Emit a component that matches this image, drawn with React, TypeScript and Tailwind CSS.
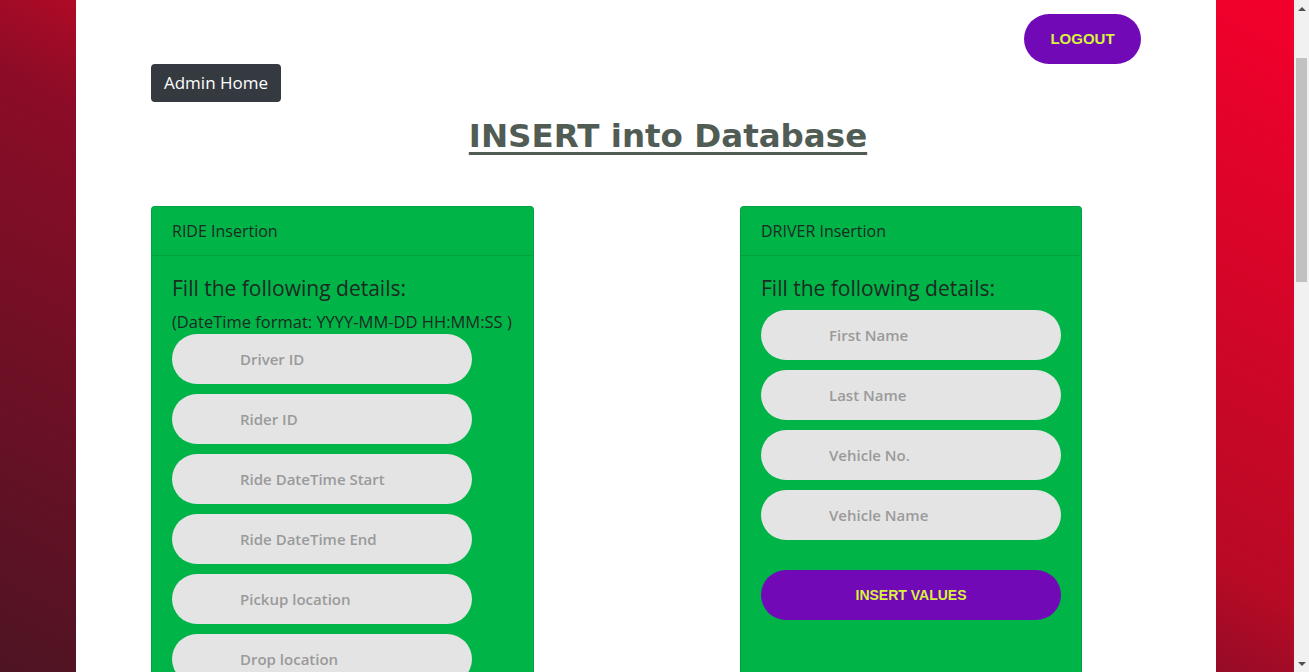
const poppins = { fontFamily: '"Open Sans", "Noto Sans", sans-serif' };

function Field({ placeholder }: { placeholder: string }) {
  return (
    <input
      type="text"
      placeholder={placeholder}
      className="h-[50px] w-[300px] rounded-full bg-[#e4e4e4] pl-[68px] text-[15px] font-semibold text-[#333] outline-none placeholder:text-[#9a9a9a]"
    />
  );
}

function InsertButton() {
  return (
    <button className="mt-[30px] h-[50px] w-[300px] rounded-full bg-[#7209b7] font-['Liberation_Sans',sans-serif] text-[14px] font-bold text-[#d7f23b]">
      INSERT VALUES
    </button>
  );
}

// fake browser scrollbar, page is scrolled a little in the reference
function Scrollbar() {
  return (
    <div className="flex w-[15px] shrink-0 flex-col items-center bg-[#f1f1f1]">
      <div className="flex h-[17px] items-center justify-center">
        <div className="h-0 w-0 border-x-[4px] border-b-[4px] border-x-transparent border-b-[#505050]" />
      </div>
      <div className="h-[41px]" />
      <div className="h-[224px] w-[11px] bg-[#c1c1c1]" />
      <div className="flex-1" />
      <div className="flex h-[17px] items-center justify-center">
        <div className="h-0 w-0 border-x-[4px] border-t-[4px] border-x-transparent border-t-[#505050]" />
      </div>
    </div>
  );
}

export default function App() {
  const rideFields = [
    "Driver ID",
    "Rider ID",
    "Ride DateTime Start",
    "Ride DateTime End",
    "Pickup location",
    "Drop location",
    "Ride Fare",
  ];
  const driverFields = ["First Name", "Last Name", "Vehicle No.", "Vehicle Name"];

  return (
    <div className="flex h-screen overflow-hidden" style={poppins}>
      <div className="flex-1 overflow-hidden bg-[linear-gradient(to_top_right,#4e1423_0%,#8c0c27_45%,#b80a25_55%,#f3002c_100%)]">
        <div className="ml-[76px] min-h-[1100px] w-[1140px] bg-white px-[75px] pt-[14px]">
          <div className="flex justify-end">
            <button className="h-[50px] w-[117px] rounded-full bg-[#7209b7] font-['Liberation_Sans',sans-serif] text-[15px] font-bold text-[#d7f23b]">
              LOGOUT
            </button>
          </div>
          <button className="h-[38px] w-[130px] rounded bg-[#343a40] text-[17px] text-white">
            Admin Home
          </button>

          <h1 className="mt-[12px] pl-[44px] text-center font-['DejaVu_Sans',sans-serif] text-[32.5px] font-bold leading-[44px] text-[#505c54] underline decoration-[3px] underline-offset-[5px]">
            INSERT into Database
          </h1>

          <div className="mt-[48px] flex items-start gap-[206px]">
            {/* Ride card */}
            <div className="w-[383px] rounded border border-black/10 bg-[#00b448]">
              <div className="border-b border-black/10 px-[20px] py-[11px] text-[16px] leading-[26px] text-[#1d2a22]">
                RIDE Insertion
              </div>
              <div className="px-[20px] pb-[40px] pt-[17px]">
                <p className="text-[21px] leading-[30px] text-[#1d2a22]">Fill the following details:</p>
                <p className="mt-[6px] text-[16.5px] leading-[25px] text-[#1d2a22]">
                  (DateTime format: YYYY-MM-DD HH:MM:SS )
                </p>
                <div className="flex flex-col gap-[10px]">
                  {rideFields.map((f) => (
                    <Field key={f} placeholder={f} />
                  ))}
                </div>
                <InsertButton />
              </div>
            </div>

            {/* Driver card */}
            <div className="w-[342px] rounded border border-black/10 bg-[#00b448]">
              <div className="border-b border-black/10 px-[20px] py-[11px] text-[16px] leading-[26px] text-[#1d2a22]">
                DRIVER Insertion
              </div>
              <div className="px-[20px] pb-[60px] pt-[17px]">
                <p className="mb-[7px] text-[21px] leading-[30px] text-[#1d2a22]">Fill the following details:</p>
                <div className="flex flex-col gap-[10px]">
                  {driverFields.map((f) => (
                    <Field key={f} placeholder={f} />
                  ))}
                </div>
                <InsertButton />
              </div>
            </div>
          </div>
        </div>
      </div>
      <Scrollbar />
    </div>
  );
}
